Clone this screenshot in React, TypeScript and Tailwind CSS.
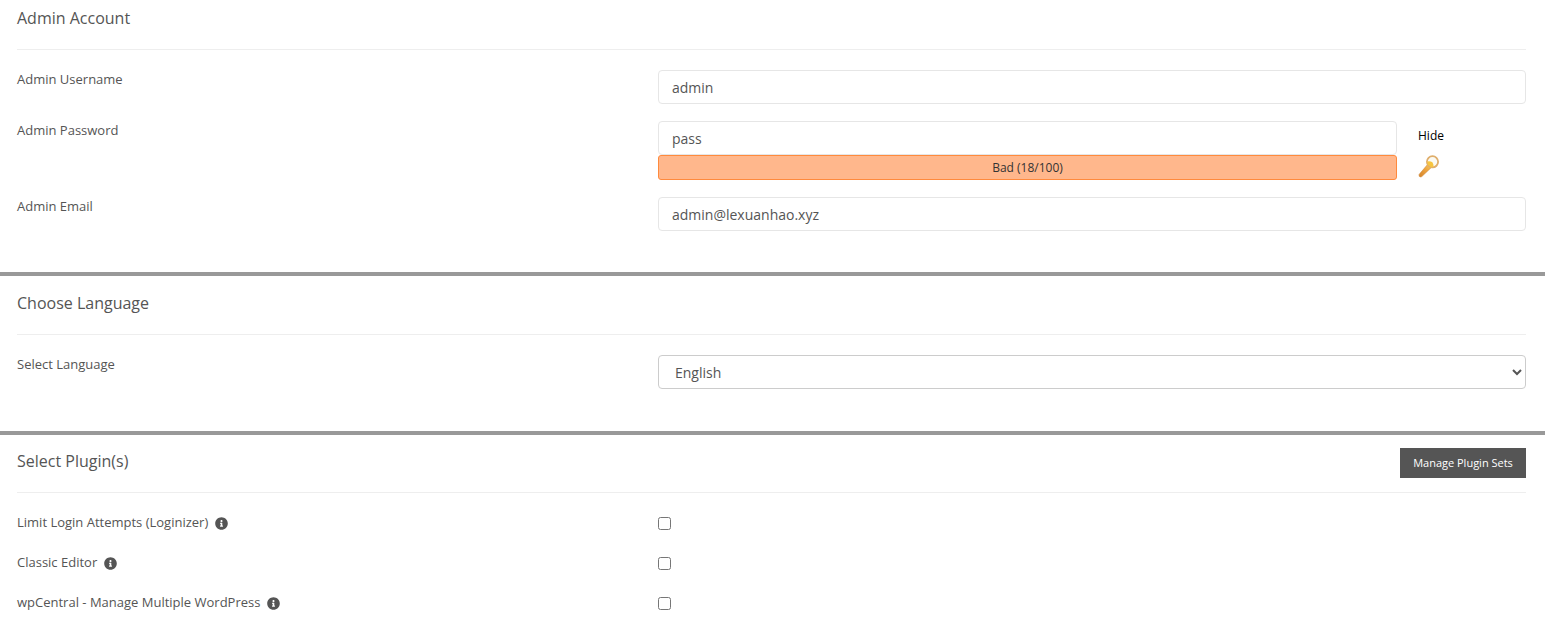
import React from "react";
import { FaInfoCircle } from "react-icons/fa";

const font = "font-['Open_Sans',sans-serif]";

function KeyIcon() {
  return (
    <svg width="22" height="24" viewBox="0 0 22 24" aria-hidden="true">
      <defs>
        <linearGradient id="keyg" x1="0" y1="1" x2="1" y2="0">
          <stop offset="0" stopColor="#d4842a" />
          <stop offset="0.55" stopColor="#eda33f" />
          <stop offset="1" stopColor="#f9cf5e" />
        </linearGradient>
      </defs>
      <path d="M1 20.6 L9.6 10.4 L13.4 13.4 L3.8 22.6 Q2.4 23.4 1.2 22.3 Z" fill="url(#keyg)" stroke="#c97f2e" strokeWidth="0.5" />
      <circle cx="14.5" cy="7.8" r="5.6" fill="#fbfaf2" stroke="#dfae6c" strokeWidth="1.8" />
      <path d="M9.4 7.4 Q12.5 7 14.4 8.2 Q15.6 9.8 15.6 12.6 L13.4 13.6 L9.6 10.6 Z" fill="#f7c53f" />
    </svg>
  );
}

function Info() {
  return <FaInfoCircle className="text-[#555] text-[13px] shrink-0" />;
}

function TextInput({ value }: { value: string }) {
  return (
    <div className="h-[34px] border border-[#e6e6e6] rounded-[4px] bg-white pl-[13px] pr-[12px] flex items-center text-[14px] text-[#555]">
      {value}
    </div>
  );
}

function Row({ label, children, className }: { label: React.ReactNode; children: React.ReactNode; className?: string }) {
  return (
    <div className={`flex ${className ?? ""}`}>
      <div className="w-[641px] shrink-0 text-[13px] font-medium text-[#555] leading-[18px]">{label}</div>
      <div className="flex-1 min-w-0">{children}</div>
    </div>
  );
}

function Heading({ children, action }: { children: React.ReactNode; action?: React.ReactNode }) {
  return (
    <div className="h-[50px] border-b border-[#eeeeee] flex items-start justify-between">
      <div className="text-[16px] font-medium text-[#555] leading-[22px] pt-[7px]">{children}</div>
      {action}
    </div>
  );
}

function PluginRow({ label }: { label: string }) {
  return (
    <div className="flex h-[40px] items-center">
      <div className="w-[641px] shrink-0 flex items-center gap-[7px] text-[13px] font-medium text-[#555]">
        <span>{label}</span>
        <Info />
      </div>
      <input type="checkbox" className="w-[13px] h-[13px] m-0" readOnly />
    </div>
  );
}

export default function App() {
  return (
    <div className={`${font} w-[1545px] h-[630px] overflow-hidden bg-white`}>
      <section className="h-[272px] pl-[17px] pr-[19px]">
        <Heading>Admin Account</Heading>
        <Row label="Admin Username" className="mt-[20px]">
          <TextInput value="admin" />
        </Row>
        <Row label="Admin Password" className="mt-[17px]">
          <div className="flex">
            <div className="w-[739px]">
              <TextInput value="pass" />
              <div className="h-[25px] bg-[#ffb78c] border border-[#ff8a3d] rounded-[3px] flex items-center justify-center text-[12px] text-[#333]">
                Bad (18/100)
              </div>
            </div>
            <div className="ml-[21px] pt-[7px]">
              <div className="text-[12px] font-medium text-black leading-[15px]">Hide</div>
              <div className="mt-[11px]"><KeyIcon /></div>
            </div>
          </div>
        </Row>
        <Row label="Admin Email" className="mt-[17px]">
          <TextInput value="admin@lexuanhao.xyz" />
        </Row>
      </section>
      <div className="h-[4px] bg-[#999999]" />
      <section className="h-[155px] pl-[17px] pr-[19px] pt-[9px]">
        <Heading>Choose Language</Heading>
        <Row label="Select Language" className="mt-[20px]">
          <select className="w-full h-[34px] border border-[#cccccc] rounded-[4px] bg-white pl-[12px] text-[14px] text-[#555]">
            <option>English</option>
          </select>
        </Row>
      </section>
      <div className="h-[4px] bg-[#999999]" />
      <section className="pl-[17px] pr-[19px] pt-[8px]">
        <Heading
          action={
            <button className="mt-[5px] w-[126px] h-[30px] bg-[#555555] text-white text-[11px] font-medium">
              Manage Plugin Sets
            </button>
          }
        >
          Select Plugin(s)
        </Heading>
        <div className="pt-[10px]">
          <PluginRow label="Limit Login Attempts (Loginizer)" />
          <PluginRow label="Classic Editor" />
          <PluginRow label="wpCentral - Manage Multiple WordPress" />
        </div>
      </section>
    </div>
  );
}
